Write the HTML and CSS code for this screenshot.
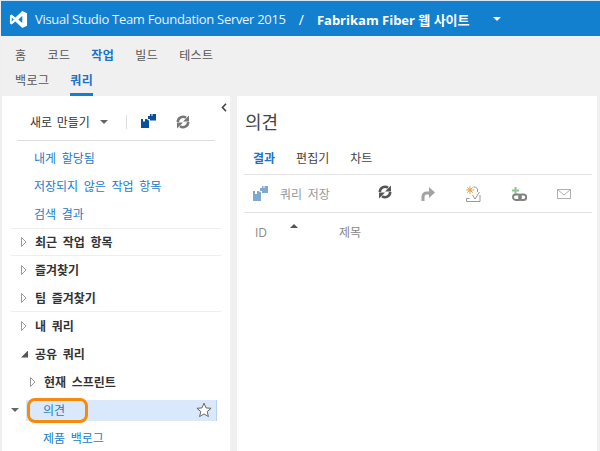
FILE: index.html
```html
<!DOCTYPE html>
<html lang="ko">
<head>
    <meta charset="utf-8">
    <title>의견</title>
    <link rel="stylesheet" href="styles.css">
</head>
<body>
<div class="frame">
    <div class="topbar">
        <svg class="vs-logo" width="19" height="19" viewBox="0 0 20 20"><path fill="#fff" d="M14 1l5 2.300v13.400L14 19 6.700 12.200 2.800 15.200 1 14.200V5.800l1.800-1 3.900 3zM14 6.400L9.800 10l4.200 3.600zM2.900 7.800v4.400L5 10z"/></svg>
        <span class="product">Visual Studio Team Foundation Server 2015</span>
        <span class="slash">/</span>
        <span class="project">Fabrikam Fiber 웹 사이트</span>
        <span class="caret caret-white"></span>
    </div>
    <div class="subnav">
        <ul class="nav-row nav-main">
            <li>홈</li>
            <li>코드</li>
            <li class="active">작업</li>
            <li>빌드</li>
            <li>테스트</li>
        </ul>
        <ul class="nav-row nav-sub">
            <li>백로그</li>
            <li class="current">쿼리</li>
        </ul>
    </div>
    <div class="panes">
        <div class="left">
            <svg class="collapse" width="6" height="9" viewBox="0 0 6 9"><path d="M5 .8L1.500 4.500 5 8.200" fill="none" stroke="#444" stroke-width="1.600"/></svg>
            <div class="left-tools">
                <span class="new-btn">새로 만들기</span>
                <span class="caret caret-gray"></span>
                <span class="tool-sep"></span>
                <svg class="save-all" width="15" height="14" viewBox="0 0 15 14"><path fill="#0a4f9c" d="M7 2h2V0h1.500v2h1V0H15v6.500H9V5H7z"/><path fill="#0a4f9c" d="M0 5h2v2.500h2V5h1.500L8 6.500V14H0z"/></svg>
                <svg class="refresh" width="14" height="14" viewBox="0 0 14 14"><path fill="none" stroke="#777" stroke-width="2.600" d="M1.800 7A5.200 5.200 0 0 1 10 2.800M12.200 7A5.200 5.200 0 0 1 4 11.200"/><path fill="#777" d="M13 .5v6H7zM1 13.500v-6h6z"/></svg>
            </div>
            <div class="quick-links">
                <a class="row link">내게 할당됨</a>
                <a class="row link">저장되지 않은 작업 항목</a>
                <a class="row link">검색 결과</a>
            </div>
            <div class="tree">
                <div class="row folder divided"><svg class="tri-open" width="6" height="10" viewBox="0 0 6 10"><path d="M.5.5L5 5 .5 9.500z" fill="#fff" stroke="#999"/></svg>최근 작업 항목</div>
                <div class="row folder"><svg class="tri-open" width="6" height="10" viewBox="0 0 6 10"><path d="M.5.5L5 5 .5 9.500z" fill="#fff" stroke="#999"/></svg>즐겨찾기</div>
                <div class="row folder divided"><svg class="tri-open" width="6" height="10" viewBox="0 0 6 10"><path d="M.5.5L5 5 .5 9.500z" fill="#fff" stroke="#999"/></svg>팀 즐겨찾기</div>
                <div class="row folder"><svg class="tri-open" width="6" height="10" viewBox="0 0 6 10"><path d="M.5.5L5 5 .5 9.500z" fill="#fff" stroke="#999"/></svg>내 쿼리</div>
                <div class="row folder"><span class="tri-down"></span>공유 쿼리</div>
                <div class="row folder nested"><svg class="tri-open" width="6" height="10" viewBox="0 0 6 10"><path d="M.5.5L5 5 .5 9.500z" fill="#fff" stroke="#999"/></svg>현재 스프린트</div>
                <div class="row selected-row">
                    <span class="caret caret-gray caret-small"></span>
                    <div class="selected">
                        <a class="link">의견</a>
                        <svg class="star" width="16" height="16" viewBox="0 0 16 16"><path d="M8 1.200l2 4.700 5.100.4-3.900 3.300 1.200 5L8 11.900l-4.400 2.700 1.200-5L.9 6.300 6 5.900z" fill="#fff" stroke="#666"/></svg>
                    </div>
                    <span class="callout"></span>
                </div>
                <a class="row link nested-link">제품 백로그</a>
            </div>
        </div>
        <div class="right">
            <h1 class="title">의견</h1>
            <ul class="tabs">
                <li class="tab-on">결과</li>
                <li>편집기</li>
                <li>차트</li>
            </ul>
            <div class="toolbar">
                <svg class="tb-save" width="15" height="15" viewBox="0 0 15 15"><path fill="#7fa9d0" d="M7 2h2V0h1.500v2h1V0H15v7H9V5H7z"/><path fill="#7fa9d0" d="M0 5h2v3h2V5h1.500L8 6.500V15H0z"/></svg>
                <span class="tb-label">쿼리 저장</span>
                <svg class="tb-refresh" width="14" height="14" viewBox="0 0 14 14"><path fill="none" stroke="#555" stroke-width="2.600" d="M1.800 7A5.200 5.200 0 0 1 10 2.800M12.200 7A5.200 5.200 0 0 1 4 11.200"/><path fill="#555" d="M13 .5v6H7zM1 13.500v-6h6z"/></svg>
                <svg class="tb-redo" width="14" height="14" viewBox="0 0 14 14"><path fill="none" stroke="#a3a3a3" stroke-width="3" d="M2 14V9.500C2 7.500 3.500 6 5.500 6H10"/><path fill="#a3a3a3" d="M8 0l6 5.500L8 11z"/></svg>
                <svg class="tb-magic" width="15" height="16" viewBox="0 0 15 16"><circle cx="4" cy="4" r="1.600" fill="#e3a857"/><path stroke="#e3a857" d="M4 0v8M0 4h8M1.200 1.200l5.600 5.600M6.800 1.200L1.200 6.800"/><path fill="none" stroke="#999" d="M7.500 1h2l2 2v3M.5 15.500h13.500V9M.5 15.500v-3h3M6.500 9l2.500 4 4.500-7"/></svg>
                <svg class="tb-link" width="15" height="14" viewBox="0 0 15 14"><path fill="#8cc68c" d="M2.500 0h2v2.500H7v2H4.500V7h-2V4.500H0v-2h2.500z"/><rect x="1" y="7.500" width="8" height="5.500" rx="2.700" fill="none" stroke="#808080" stroke-width="1.800"/><rect x="7" y="7.500" width="7.200" height="5.500" rx="2.700" fill="none" stroke="#808080" stroke-width="1.800"/></svg>
                <svg class="tb-mail" width="14" height="10" viewBox="0 0 14 10"><path fill="#fff" stroke="#b0b0b0" d="M.5.5h13v9H.5zM.5.5L7 6l6.500-5.500"/></svg>
            </div>
            <div class="grid-head">
                <span class="col-id">ID</span>
                <span class="sort-up"></span>
                <span class="col-title">제목</span>
            </div>
        </div>
    </div>
</div>
</body>
</html>
```

FILE: styles.css
```css
* { box-sizing: border-box; }

html, body { margin: 0; padding: 0; }

body {
    font-family: "Open Sans", "Noto Sans CJK KR", sans-serif;
    font-size: 12px;
    word-spacing: 2.500px;
    color: #333;
    background: #fff;
}

ul { margin: 0; padding: 0; list-style: none; }

.frame {
    width: 600px;
    height: 451px;
    overflow: hidden;
    display: flex;
    flex-direction: column;
    background: #f0f0f0;
    border-top: 1px solid #d5e6f5;
    border-left: 1px solid #eee;
}

/* top bar */
.topbar {
    height: 35px;
    flex: none;
    display: flex;
    align-items: center;
    padding-left: 8px;
    background: #1380cf;
    color: #fff;
    border-top: 1px solid #1380cf;
    word-spacing: 0;
}
.vs-logo { flex: none; margin-right: 7px; }
.product { font-size: 13px; letter-spacing: -.3px; color: #e8f2fa; }
.slash { margin: 0 13px 0 13px; font-size: 14px; }
.project { font-size: 13px; font-weight: 700; }

.caret { width: 0; height: 0; border-style: solid; border-color: transparent; border-width: 4px 4px 0; }
.caret-white { border-top-color: #fff; margin-left: 23px; }
.caret-gray { border-top-color: #666; }

/* nav */
.subnav { height: 60px; flex: none; padding-top: 11px; }
.nav-row { display: flex; padding-left: 14px; line-height: 18px; color: #555; letter-spacing: .4px; }
.nav-main { height: 25px; gap: 21px; }
.nav-sub { height: 24px; gap: 21px; }
.nav-main .active { color: #1a74c9; font-weight: 700; }
.current { color: #1a74c9; font-weight: 700; height: 24px; border-bottom: 3px solid #1380cf; }

/* panes */
.panes { flex: 1; display: flex; min-height: 0; padding-left: 1px; }
.left { position: relative; width: 228px; background: #fff; flex: none; }
.right { width: 360px; margin-left: 7px; background: #fff; flex: none; padding: 0 5px 0 7px; }

.collapse { position: absolute; top: 7px; right: 3px; }

.left-tools {
    height: 45px;
    margin: 0 15px;
    padding: 8px 0 0 13px;
    display: flex;
    align-items: center;
    border-bottom: 1px solid #ddd;
    word-spacing: 1.500px;
}
.new-btn { color: #333; }
.left-tools .caret { margin-left: 10px; }
.tool-sep { width: 1px; height: 14px; background: #ddd; margin: 0 14px 0 18px; }
.save-all { margin-right: 20px; margin-top: -3px; }

.quick-links { border-bottom: 1px solid #eee; margin: 0 9px; padding-top: 3px; }
.quick-links .row { padding-left: 23px; }

.tree { margin-top: -1px; }
.row { display: flex; align-items: center; height: 28px; }
.link { color: #1a7cc8; }
.folder { padding-left: 10px; font-weight: 700; color: #333; margin: 0 9px; }
.divided { border-bottom: 1px solid #eee; }
.nested { padding-left: 19px; }
.nested-link { padding-left: 41px; }

.tri-open { flex: none; margin-right: 8px; }
.tri-down {
    width: 7px;
    height: 7px;
    flex: none;
    margin-right: 7px;
    background: #555;
    clip-path: polygon(100% 0, 100% 100%, 0 100%);
}

.selected-row { position: relative; padding-left: 9px; }
.caret-small { flex: none; margin-right: 7px; }
.selected {
    width: 191px;
    height: 21px;
    display: flex;
    align-items: center;
    justify-content: space-between;
    padding: 0 4px 0 17px;
    background: #d9e9fb;
    border-right: 1px solid #b6d3f0;
}
.callout {
    position: absolute;
    left: 25px;
    top: 2px;
    width: 61px;
    height: 25px;
    border: 3px solid #f58a0b;
    border-radius: 8px;
}

/* right pane */
.title { margin: 0; height: 48px; padding: 14px 1px 0; font-size: 18px; line-height: 24px; font-weight: 400; color: #444; }
.tabs { height: 31px; display: flex; gap: 21px; padding-left: 9px; border-bottom: 1px solid #e3e3e3; line-height: 30px; color: #444; }
.tab-on { color: #1a74c9; font-weight: 700; }

.toolbar {
    height: 38px;
    display: flex;
    align-items: center;
    padding-left: 9px;
    border-bottom: 1px solid #e3e3e3;
}
.tb-label { margin-left: 12px; color: #999; }
.tb-refresh { margin-left: 48px; margin-top: -3px; }
.tb-redo { margin-left: 29px; }
.tb-magic { margin-left: 31px; }
.tb-link { margin-left: 31px; }
.tb-mail { margin-left: 30px; }

.grid-head { display: flex; align-items: center; height: 38px; padding-left: 11px; color: #888; }
.col-id { width: 35px; }
.sort-up {
    width: 0;
    height: 0;
    margin-top: -12px;
    border-style: solid;
    border-color: transparent;
    border-width: 0 4px 4px;
    border-bottom-color: #555;
}
.col-title { margin-left: 41px; }
```
